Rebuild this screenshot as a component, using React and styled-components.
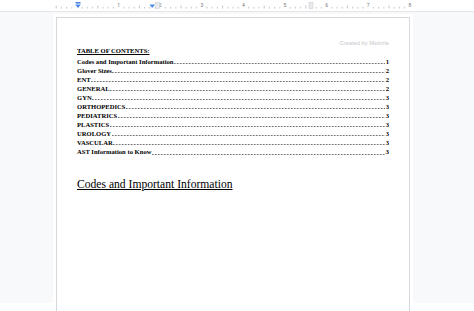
import React from 'react';
import styled, { createGlobalStyle } from 'styled-components';

const PX_PER_IN = 41.6;
const ORIGIN = 77;
const SERIF = "'Liberation Serif', 'Times New Roman', serif";

const entries = [
  { label: 'Codes and Important Information', page: 1 },
  { label: 'Glover Sizes', page: 2 },
  { label: 'ENT', page: 2 },
  { label: 'GENERAL', page: 2 },
  { label: 'GYN', page: 3 },
  { label: 'ORTHOPEDICS', page: 3 },
  { label: 'PEDIATRICS', page: 3 },
  { label: 'PLASTICS', page: 3 },
  { label: 'UROLOGY', page: 3 },
  { label: 'VASCULAR', page: 3 },
  { label: 'AST Information to Know', page: 3, big: true }
];

const GlobalStyle = createGlobalStyle`
  html, body {
    margin: 0;
    padding: 0;
    background: #ffffff;
    overflow: hidden;
  }
  #root {
    width: 474px;
    height: 311px;
  }
`;

class App extends React.Component {
  renderRuler = () => {
    const ticks = [];
    for (let i = -4; i <= 64; i++) {
      const x = ORIGIN + (i * PX_PER_IN) / 8;
      if (x < 56 || x > 410) continue;
      if (i % 8 === 0) continue;
      const h = i % 4 === 0 ? 3 : 1.6;
      ticks.push(
        <line key={i} x1={x} x2={x} y1={8.5 - h} y2={8.5} stroke="#9aa0a6" strokeWidth="0.6" />
      );
    }
    const nums = [];
    for (let n = 1; n <= 8; n++) {
      nums.push(
        <text key={n} x={ORIGIN + n * PX_PER_IN} y={6.5} fontSize="5" textAnchor="middle" fill="#70757a" fontFamily="Roboto, sans-serif">
          {n}
        </text>
      );
    }
    return (
      <RulerSvg width="474" height="11" viewBox="0 0 474 11">
        {ticks}
        {nums}
        <rect x="155.5" y="2.5" width="4" height="6" fill="#e8eaed" stroke="#c6c9cd" strokeWidth="0.5" />
        <rect x="309" y="2.5" width="4" height="6" fill="#e8eaed" stroke="#c6c9cd" strokeWidth="0.5" />
        <rect x="75.5" y="2" width="5" height="1.6" fill="#4a86e8" />
        <path d="M75.2 4.4 L80.8 4.4 L78 8 Z" fill="#4a86e8" />
        <path d="M149.5 4.4 L155 4.4 L152.2 8 Z" fill="#4a86e8" />
      </RulerSvg>
    );
  };

  render = () => {
    return (
      <Screen>
        <GlobalStyle />
        <Ruler>{this.renderRuler()}</Ruler>
        <Workspace>
          <Page>
            <Header>Created by Melzzle</Header>
            <TocTitle>TABLE OF CONTENTS:</TocTitle>
            <TocList>
              {entries.map(e => (
                <TocRow key={e.label}>
                  <TocLabel>{e.label}</TocLabel>
                  <Leader />
                  <TocPage big={e.big}>{e.page}</TocPage>
                </TocRow>
              ))}
            </TocList>
            <Heading>Codes and Important Information</Heading>
          </Page>
        </Workspace>
      </Screen>
    );
  };
}

const Screen = styled.div`
  width: 474px;
  height: 311px;
  display: flex;
  flex-direction: column;
  background: #ffffff;
  overflow: hidden;
`;

const Ruler = styled.div`
  height: 11px;
  flex-shrink: 0;
  background: #ffffff;
  border-bottom: 1px solid #e3e5e8;
`;

const RulerSvg = styled.svg`
  display: block;
`;

const Workspace = styled.div`
  height: 291px;
  flex-shrink: 0;
  background: #f8f9fa;
  padding: 5px 0 0 56px;
  box-sizing: border-box;
  overflow: visible;
`;

const Page = styled.div`
  width: 354px;
  height: 320px;
  box-sizing: border-box;
  background: #ffffff;
  border: 1px solid #d6d8db;
  box-shadow: 0 0 0 3px #ffffff;
  padding: 21px 20px 0 20px;
  font-family: ${SERIF};
  color: #000000;
`;

const Header = styled.div`
  text-align: right;
  font-family: 'Liberation Sans', Arial, sans-serif;
  font-size: 5.8px;
  line-height: 8px;
  color: #c4c7cb;
  margin-bottom: -1px;
`;

const TocTitle = styled.div`
  font-family: ${SERIF};
  font-size: 6.6px;
  font-weight: 700;
  line-height: 9px;
  text-decoration: underline;
  margin-bottom: 1.5px;
`;

const TocList = styled.div`
  display: flex;
  flex-direction: column;
`;

const TocRow = styled.div`
  display: flex;
  align-items: baseline;
  font-family: ${SERIF};
  font-size: 6.6px;
  font-weight: 700;
  line-height: 9.1px;
  white-space: nowrap;
`;

const TocLabel = styled.span`
  flex-shrink: 0;
`;

const Leader = styled.span`
  flex: 1;
  height: 0.9px;
  margin: 0 0.5px;
  background-image: linear-gradient(to right, #444 0, #444 0.8px, transparent 0.8px);
  background-size: 1.5px 0.9px;
  background-repeat: repeat-x;
  opacity: 0.9;
`;

const TocPage = styled.span`
  flex-shrink: 0;
  font-size: ${({ big }) => (big ? '7px' : '6.6px')};
`;

const Heading = styled.div`
  margin-top: 20px;
  font-family: ${SERIF};
  font-size: 11.6px;
  font-weight: 400;
  line-height: 14px;
  text-decoration: underline;
  text-decoration-thickness: 1px;
  text-underline-offset: 1px;
`;

export default App;
